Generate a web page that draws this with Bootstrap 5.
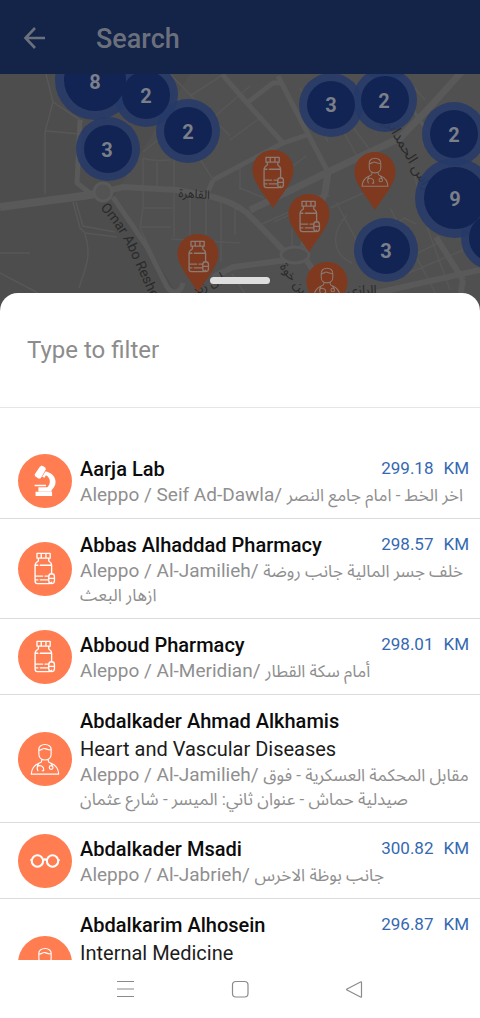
<!DOCTYPE html>
<html lang="en">
<head>
<meta charset="utf-8">
<meta name="viewport" content="width=device-width, initial-scale=1">
<title>Search</title>
<link href="https://cdn.jsdelivr.net/npm/bootstrap@5.3.0/dist/css/bootstrap.min.css" rel="stylesheet">
<style>
  body { font-family: Roboto, "Noto Sans Arabic", "DejaVu Sans", sans-serif; background: #fff; }
  .app-bar { background: #142348; color: #6b707c; height: 74px; padding: 3px 22px 0; gap: 48px; }
  .app-bar h1 { font-size: 27px; line-height: 32px; font-weight: 500; }
  .app-bar button { color: #6b707c; width: 26px; height: 26px; }
  .map-area { height: 240px; background: #4d4d4d; }
  .map-area svg { width: 100%; height: 100%; }
  .sheet { margin-top: -21px; border-radius: 18px 18px 0 0; background: #fff; min-height: 0; }
  .grab { width: 60px; height: 7px; top: -16px; border-radius: 4px; background: #dedede; }
  .filter-box { border-bottom: 1px solid #e6e6e6; height: 115px; flex: none; }
  .filter-box input { font-size: 24px; line-height: 32px; padding: 0 27px; color: #333; }
  .filter-box input::placeholder { color: #8c8c8c; opacity: 1; }
  .results { padding-top: 35px; min-height: 0; overflow: hidden; }
  .place { padding: 11px 11px 10px 18px; border-bottom: 1px solid #dcdcdc; gap: 8px; }
  .place-text { padding: 1px 0; }
  .place:last-child .place-text { padding-bottom: 49px; }
  .disc { width: 54px; height: 54px; background: #ff7d50; }
  .place h2 { font-size: 20px; line-height: 28px; font-weight: 500; color: #0c0c0c; }
  .field { font-size: 20px; line-height: 28px; color: #1c1c1c; }
  .addr { font-size: 19px; line-height: 24px; color: #8f8f8f; white-space: nowrap; }
  .addr bdi { font-size: 17px; line-height: 20px; }
  .dist { font-size: 17px; line-height: 26px; color: #3468b2; column-gap: 10px; }
  .sys-nav { height: 58px; gap: 88px; flex: none; }
  .sys-nav button { width: 26px; height: 26px; color: #8a8a8a; }
</style>
</head>
<body class="d-flex flex-column vh-100 overflow-hidden">

<svg class="d-none" aria-hidden="true">
  <defs>
    <symbol id="bottle" viewBox="1 0 32 36">
      <g fill="none" stroke="currentColor" stroke-width="1.4" stroke-linejoin="round" stroke-linecap="round">
        <path d="M8.500 1.500h14v5h-14zM13 1.500v5M18 1.500v5M10 6.500v3C8 10.500 6.500 11.500 6.500 14v17q0 2.500 2.500 2.500h12q2.500 0 3-1.500M21 6.500v3c1.500 1 3 2 3 4.500v9M6.500 14h3M12 14h12M6.500 25.500h8M17 25.500h4M6.500 29.500h3M12 29.500h8"/>
        <rect x="21" y="23" width="6" height="10.500" rx="3"/><path d="M21 28h6"/>
      </g>
    </symbol>
    <symbol id="doctor" viewBox="0 0 32 36">
      <g fill="none" stroke="currentColor" stroke-width="1.200" stroke-linejoin="round" stroke-linecap="round">
        <path d="M9.500 9C8 .5 24 .5 22.500 9v4c0 8-13 8-13 0zM9.500 8.500c3 .5 4-2.500 6.500-1.500s4 1.500 6.500 1.500M12.500 18.500v1.500q0 1.500-3 2.500Q2 25.500 1.500 34h29Q30 25.500 22.500 22.500q-3-1-3-2.500v-1.500M9.500 22.500q-2.500 3-1.500 6.500M8.500 30.500c-2-4 0-5.500 2-5.500 3 0 4.500 2.500 4 5.500h-1.500M22 22.500q1.500 1 1.500 3"/>
        <circle cx="22.500" cy="27" r="2"/>
      </g>
    </symbol>
    <symbol id="microscope" viewBox="0 0 32 36">
      <path fill="currentColor" d="M10.500 3l2-1.500 3.500 2 1 2-5.500 9.500-2 .5-4-2.500-.5-2zM6 29.500h17.500V34H6zM5 22h12v1.500H5zM9 24.500h9.500c4-3.500 3.500-10-1.500-12.500l-1.500 2.500-2.500-1 3.500-5.500c10.500 1.500 14.500 13 6.500 19.500v1.500H9z"/>
    </symbol>
    <symbol id="glasses" viewBox="0 0 32 36">
      <g fill="none" stroke="currentColor" stroke-width="2.200">
        <circle cx="8" cy="18" r="6"/><circle cx="24" cy="18" r="6"/><path d="M14 17q2-1.500 4 0M.5 17H2M30 17h1.500"/>
      </g>
    </symbol>
    <symbol id="pin" viewBox="-21 0 42 58" overflow="visible">
      <path fill="#7f391f" d="M0 0C12 0 20.500 9 20.500 20 20.500 32 8 45 0 58-8 45-20.500 32-20.500 20-20.500 9-12 0 0 0z"/>
    </symbol>
  </defs>
</svg>

<header class="app-bar d-flex align-items-center flex-shrink-0">
  <button type="button" class="btn p-0 border-0 d-flex" aria-label="Back">
    <svg width="26" height="26" viewBox="0 0 26 26" fill="none" stroke="currentColor" stroke-width="2.600"><path d="M23 12H4M13 2L3.500 12l9.500 10"/></svg>
  </button>
  <h1 class="m-0">Search</h1>
</header>

<section class="map-area flex-shrink-0" aria-label="Map">
  <svg class="d-block" viewBox="0 0 480 240" preserveAspectRatio="xMidYMin slice" font-family="Roboto, 'Noto Sans Arabic', sans-serif">
    <path fill="#505050" d="M190 0h290v240H190l-75-120z"/>
    <!-- minor streets -->
    <g fill="none" stroke="#575757" stroke-width="1.500">
      <path d="M46 0l7 28-8 30v62M46 57l34 3M53 28l30 20M73 128l7 26 5 5 32 4M76 128l7 24 32 6M85 160c8 22-2 40-6 54M0 179h30M0 199l38 20M143 84v50l-3 20 26 54M143 84c10 4 20 2 28 2M157 88v26M174 84v79M143 134h30M141 153h30M190 122v82M171 165l69 4M206 121v40M221 128v60M198 82l14 22M235 133v28M143 78l57-46M190 22l34-22M170 0l60 62M206 50l44-38M230 66l30-22"/>
      <path d="M240 114l24 10M240 90v26M262 150l36-16M306 82l-40 30M345 60l14 26M352 52l18 24M336 128l30 56M330 134l40-18M300 136l-26 12M352 189c-22-10-20-32-5-48M390 134l46 86M396 150l8-6 12 6M412 90l14 60 24 66M440 168l-44 22M392 206l76-32M403 0l22 26M412 44l-22-38M300 14l28 54M292 155v18M232 200l20 30M330 122h-20M340 40l-30 14"/>
    </g>
    <!-- main roads -->
    <g fill="none" stroke="#595959" stroke-linejoin="round">
      <path stroke-width="8" d="M0 133l90-12 13-3"/>
      <path stroke-width="6" d="M103 118l20-5 54 3 36 7q20 5 34 16 14 14 36 37"/>
      <path stroke-width="5" d="M113 123l34 50 20 40c6 8 14 6 16-4M80 46l-3 63 14 11"/>
      <path stroke-width="5" d="M222 0l25 29 36 40M213 106l70-37 24-8M247 29l26-20h8M278 2l19 37 31 59M208 118l5-12"/>
      <path stroke-width="7" d="M250 136l78-38 72-34 30-31 27-30 10-12"/>
      <path stroke-width="7" d="M328 98l-3 21-22 54"/>
      <path stroke-width="6" d="M213 203l20-10 54-7M305 184l16 24M376 219l104-23M436 163l27 43M463 206l-6 34"/>
      <path stroke-width="3" d="M393 6l40 60"/>
    </g>
    <circle cx="103" cy="118" r="9" fill="#535353" stroke="#5a5a5a" stroke-width="3"/>
    <ellipse cx="295" cy="181" rx="14" ry="8" fill="#505050" stroke="#595959" stroke-width="3"/>
    <!-- street names -->
    <g fill="#2a2a2a" font-size="13">
      <path id="omar" fill="none" d="M100 134Q121 156 133 185L160 244"/>
      <text font-size="14"><textPath href="#omar">Omar Abo Reshel</textPath></text>
      <text x="194" y="124" text-anchor="middle" font-size="12" transform="rotate(4 194 124)">القاهرة</text>
      <text x="406" y="84" text-anchor="middle" font-size="15" transform="rotate(60 406 84)">فراس الحمداني</text>
      <text x="362" y="220" text-anchor="middle">الرازي</text>
      <text x="290" y="207" text-anchor="middle" transform="rotate(52 290 207)">بن خوة</text>
      <text x="210" y="214" text-anchor="middle" transform="rotate(-28 210 214)">ابن زيد</text>
    </g>
    <!-- clusters -->
    <g fill="#25396a" fill-opacity=".85">
      <circle cx="386" cy="-26" r="32"/>
      <circle cx="95" cy="6" r="40"/><circle cx="146" cy="21" r="32"/><circle cx="188" cy="57" r="32"/><circle cx="108" cy="75" r="32"/>
      <circle cx="331" cy="31" r="32"/><circle cx="385" cy="26" r="32"/><circle cx="454" cy="60" r="32"/><circle cx="455" cy="124" r="40"/>
      <circle cx="493" cy="164" r="32"/><circle cx="386" cy="176" r="32"/>
    </g>
    <g fill="#122454">
      <circle cx="95" cy="6" r="31"/><circle cx="146" cy="21" r="24"/><circle cx="188" cy="57" r="24"/><circle cx="108" cy="75" r="24"/>
      <circle cx="331" cy="31" r="24"/><circle cx="385" cy="26" r="24"/><circle cx="454" cy="60" r="24"/><circle cx="455" cy="124" r="31"/>
      <circle cx="493" cy="164" r="24"/><circle cx="386" cy="176" r="24"/>
    </g>
    <g fill="#7b7f89" font-size="20" font-weight="700" text-anchor="middle">
      <text x="95" y="15">8</text><text x="146" y="29">2</text><text x="188" y="65">2</text><text x="107" y="83">3</text>
      <text x="331" y="38">3</text><text x="384" y="34">2</text><text x="454" y="68">2</text><text x="455" y="132">9</text><text x="386" y="184">3</text>
    </g>
    <!-- places -->
    <g color="#8b7b74">
      <g transform="translate(273 76)"><use href="#pin" x="-21" width="42" height="58"/><use href="#bottle" x="-15" y="6" width="32" height="34"/></g>
      <g transform="translate(375 78)"><use href="#pin" x="-21" width="42" height="58"/><use href="#doctor" x="-15" y="4" width="30" height="32"/></g>
      <g transform="translate(309 120)"><use href="#pin" x="-21" width="42" height="58"/><use href="#bottle" x="-15" y="6" width="32" height="34"/></g>
      <g transform="translate(198 160)"><use href="#pin" x="-21" width="42" height="58"/><use href="#bottle" x="-15" y="6" width="32" height="34"/></g>
      <g transform="translate(327 188)"><use href="#pin" x="-21" width="42" height="58"/><use href="#doctor" x="-15" y="4" width="30" height="32"/></g>
    </g>
  </svg>
</section>

<main class="sheet position-relative flex-grow-1 d-flex flex-column">
  <div class="grab position-absolute start-50 translate-middle-x"></div>
  <div class="filter-box d-flex align-items-center">
    <input type="text" class="form-control border-0 shadow-none bg-transparent" placeholder="Type to filter" aria-label="Type to filter">
  </div>
  <div class="results flex-grow-1">
    <article class="place d-flex align-items-center">
      <div class="disc rounded-circle text-white d-flex align-items-center justify-content-center flex-shrink-0"><svg width="32" height="34"><use href="#microscope"/></svg></div>
      <div class="place-text flex-grow-1">
        <div class="d-flex justify-content-between"><h2 class="m-0">Aarja Lab</h2><div class="dist d-flex"><span>299.18</span> <span>KM</span></div></div>
        <div class="addr">Aleppo / Seif Ad-Dawla/ <bdi>اخر الخط - امام جامع النصر</bdi></div>
      </div>
    </article>
    <article class="place d-flex align-items-center">
      <div class="disc rounded-circle text-white d-flex align-items-center justify-content-center flex-shrink-0"><svg width="32" height="34"><use href="#bottle"/></svg></div>
      <div class="place-text flex-grow-1">
        <div class="d-flex justify-content-between"><h2 class="m-0">Abbas Alhaddad Pharmacy</h2><div class="dist d-flex"><span>298.57</span> <span>KM</span></div></div>
        <div class="addr">Aleppo / Al-Jamilieh/ <bdi>خلف جسر المالية جانب روضة<br>ازهار البعث</bdi></div>
      </div>
    </article>
    <article class="place d-flex align-items-center">
      <div class="disc rounded-circle text-white d-flex align-items-center justify-content-center flex-shrink-0"><svg width="32" height="34"><use href="#bottle"/></svg></div>
      <div class="place-text flex-grow-1">
        <div class="d-flex justify-content-between"><h2 class="m-0">Abboud Pharmacy</h2><div class="dist d-flex"><span>298.01</span> <span>KM</span></div></div>
        <div class="addr">Aleppo / Al-Meridian/ <bdi>أمام سكة القطار</bdi></div>
      </div>
    </article>
    <article class="place d-flex align-items-center">
      <div class="disc rounded-circle text-white d-flex align-items-center justify-content-center flex-shrink-0"><svg width="32" height="34"><use href="#doctor"/></svg></div>
      <div class="place-text flex-grow-1">
        <h2 class="m-0">Abdalkader Ahmad Alkhamis</h2>
        <div class="field">Heart and Vascular Diseases</div>
        <div class="addr">Aleppo / Al-Jamilieh/ <bdi>مقابل المحكمة العسكرية - فوق<br>صيدلية حماش - عنوان ثاني: الميسر - شارع عثمان</bdi></div>
      </div>
    </article>
    <article class="place d-flex align-items-center">
      <div class="disc rounded-circle text-white d-flex align-items-center justify-content-center flex-shrink-0"><svg width="32" height="34"><use href="#glasses"/></svg></div>
      <div class="place-text flex-grow-1">
        <div class="d-flex justify-content-between"><h2 class="m-0">Abdalkader Msadi</h2><div class="dist d-flex"><span>300.82</span> <span>KM</span></div></div>
        <div class="addr">Aleppo / Al-Jabrieh/ <bdi>جانب بوظة الاخرس</bdi></div>
      </div>
    </article>
    <article class="place d-flex align-items-center">
      <div class="disc rounded-circle text-white d-flex align-items-center justify-content-center flex-shrink-0"><svg width="32" height="34"><use href="#doctor"/></svg></div>
      <div class="place-text flex-grow-1">
        <div class="d-flex justify-content-between"><h2 class="m-0">Abdalkarim Alhosein</h2><div class="dist d-flex"><span>296.87</span> <span>KM</span></div></div>
        <div class="field">Internal Medicine</div>
      </div>
    </article>
  </div>
</main>

<nav class="sys-nav d-flex justify-content-center align-items-center" aria-label="System">
  <button type="button" class="btn p-0 border-0 d-flex" aria-label="Menu"><svg width="26" height="26" viewBox="0 0 26 26" stroke="currentColor" stroke-width="1.200"><path d="M4 5.500h17M4 13h17M4 20.500h17"/></svg></button>
  <button type="button" class="btn p-0 border-0 d-flex" aria-label="Home"><svg width="26" height="26" viewBox="0 0 26 26" fill="none" stroke="currentColor" stroke-width="1.200"><rect x="5.500" y="5.500" width="15.500" height="15.500" rx="3.500"/></svg></button>
  <button type="button" class="btn p-0 border-0 d-flex" aria-label="Back"><svg width="26" height="26" viewBox="0 0 26 26" fill="none" stroke="currentColor" stroke-width="1.200" stroke-linejoin="round"><path d="M20.500 6.500v14q0 1-1 .5L6 14q-1-.5 0-1L19.500 6q1-.5 1 .5z"/></svg></button>
</nav>

<script src="https://cdn.jsdelivr.net/npm/bootstrap@5.3.0/dist/js/bootstrap.bundle.min.js"></script>
</body>
</html>
